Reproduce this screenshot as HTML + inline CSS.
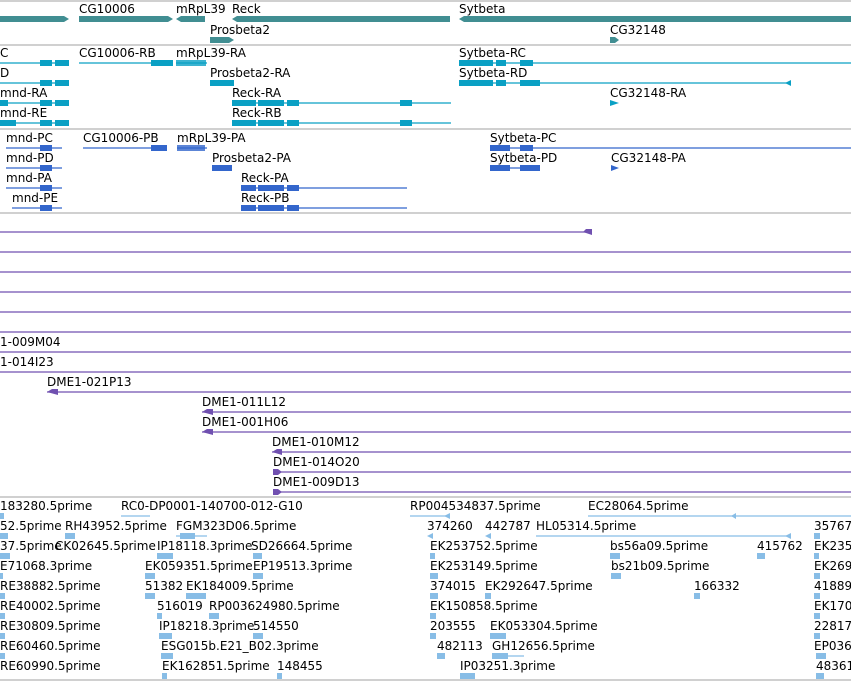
<!DOCTYPE html>
<html><head><meta charset="utf-8"><style>
html,body{margin:0;padding:0;background:#fff;}
svg{display:block;}
text{font-family:"DejaVu Sans","Liberation Sans",sans-serif;font-size:12px;fill:#000;}
</style></head><body>
<svg width="851" height="681" viewBox="0 0 851 681" xmlns="http://www.w3.org/2000/svg">
<g stroke="#c0c0c0" stroke-width="1.5">
<line x1="0" y1="1" x2="851" y2="1"/><line x1="0" y1="45" x2="851" y2="45"/>
<line x1="0" y1="129" x2="851" y2="129"/><line x1="0" y1="213" x2="851" y2="213"/>
<line x1="0" y1="497" x2="851" y2="497"/><line x1="0" y1="680" x2="851" y2="680"/>
</g>
<g fill="#418e92">
<polygon points="0,16 64,16 69,19 64,22 0,22"/>
<polygon points="79,16 168,16 173,19 168,22 79,22"/>
<polygon points="181,16 205,16 205,22 181,22 176,19"/>
<polygon points="237,16 450,16 450,22 237,22 232,19"/>
<polygon points="464,16 851,16 851,22 464,22 459,19"/>
<polygon points="210,37 229,37 234,40 229,43 210,43"/>
<polygon points="610,37 615,37 619,40 615,43 610,43"/>
</g>
<text x="79" y="13">CG10006</text><text x="176" y="13">mRpL39</text><text x="232" y="13">Reck</text><text x="459" y="13">Sytbeta</text>
<text x="210" y="34">Prosbeta2</text><text x="610" y="34">CG32148</text>
<g stroke="#0aa0c4" stroke-width="1.3">
<line x1="0" y1="63" x2="69" y2="63"/><line x1="0" y1="83" x2="69" y2="83"/><line x1="0" y1="103" x2="69" y2="103"/><line x1="0" y1="123" x2="69" y2="123"/>
<line x1="79" y1="63" x2="173" y2="63"/><line x1="176" y1="63" x2="207" y2="63"/>
<line x1="232" y1="103" x2="451" y2="103"/><line x1="232" y1="123" x2="451" y2="123"/>
<line x1="459" y1="63" x2="851" y2="63"/><line x1="459" y1="83" x2="791" y2="83"/>
</g>
<g fill="#0aa0c4">
<rect x="40" y="60" width="12" height="6"/><rect x="55" y="60" width="14" height="6"/>
<rect x="40" y="80" width="12" height="6"/><rect x="55" y="80" width="14" height="6"/>
<rect x="0" y="100" width="8" height="6"/><rect x="40" y="100" width="12" height="6"/><rect x="55" y="100" width="14" height="6"/>
<rect x="0" y="120" width="16" height="6"/><rect x="40" y="120" width="12" height="6"/><rect x="55" y="120" width="14" height="6"/>
<rect x="151" y="60" width="22" height="6"/>
<rect x="176" y="60" width="30" height="6" opacity=".8"/>
<rect x="210" y="80" width="24" height="6"/>
<rect x="232" y="100" width="24" height="6"/><rect x="258" y="100" width="26" height="6"/><rect x="287" y="100" width="12" height="6"/><rect x="400" y="100" width="12" height="6"/>
<rect x="232" y="120" width="24" height="6"/><rect x="258" y="120" width="26" height="6"/><rect x="287" y="120" width="12" height="6"/><rect x="400" y="120" width="12" height="6"/>
<rect x="459" y="60" width="34" height="6"/><rect x="496" y="60" width="10" height="6"/><rect x="520" y="60" width="13" height="6"/>
<rect x="459" y="80" width="34" height="6"/><rect x="496" y="80" width="10" height="6"/><rect x="520" y="80" width="20" height="6"/>
<polygon points="791,80 791,86 785,83"/><polygon points="610,100 619,103 610,106"/>
</g>
<text x="0" y="57">C</text><text x="79" y="57">CG10006-RB</text><text x="176" y="57">mRpL39-RA</text><text x="459" y="57">Sytbeta-RC</text>
<text x="0" y="77">D</text><text x="210" y="77">Prosbeta2-RA</text><text x="459" y="77">Sytbeta-RD</text>
<text x="0" y="97">mnd-RA</text><text x="232" y="97">Reck-RA</text><text x="610" y="97">CG32148-RA</text>
<text x="0" y="117">mnd-RE</text><text x="232" y="117">Reck-RB</text>
<g stroke="#3366cc" stroke-width="1.3">
<line x1="6" y1="148" x2="62" y2="148"/><line x1="6" y1="168" x2="62" y2="168"/><line x1="6" y1="188" x2="62" y2="188"/><line x1="12" y1="208" x2="62" y2="208"/>
<line x1="83" y1="148" x2="167" y2="148"/><line x1="177" y1="148" x2="207" y2="148"/>
<line x1="241" y1="188" x2="407" y2="188"/><line x1="241" y1="208" x2="407" y2="208"/>
<line x1="490" y1="148" x2="851" y2="148"/><line x1="490" y1="168" x2="540" y2="168"/>
</g>
<g fill="#3366cc">
<rect x="40" y="145" width="12" height="6"/><rect x="40" y="165" width="12" height="6"/><rect x="40" y="185" width="12" height="6"/><rect x="40" y="205" width="12" height="6"/>
<rect x="151" y="145" width="16" height="6"/><rect x="177" y="145" width="28" height="6" opacity=".8"/>
<rect x="212" y="165" width="20" height="6"/>
<rect x="241" y="185" width="15" height="6"/><rect x="258" y="185" width="26" height="6"/><rect x="287" y="185" width="12" height="6"/>
<rect x="241" y="205" width="15" height="6"/><rect x="258" y="205" width="26" height="6"/><rect x="287" y="205" width="12" height="6"/>
<rect x="490" y="145" width="20" height="6"/><rect x="520" y="145" width="13" height="6"/>
<rect x="490" y="165" width="20" height="6"/><rect x="520" y="165" width="20" height="6"/>
<polygon points="611,165 619,168 611,171"/>
</g>
<text x="6" y="142">mnd-PC</text><text x="83" y="142">CG10006-PB</text><text x="177" y="142">mRpL39-PA</text><text x="490" y="142">Sytbeta-PC</text>
<text x="6" y="162">mnd-PD</text><text x="212" y="162">Prosbeta2-PA</text><text x="490" y="162">Sytbeta-PD</text><text x="611" y="162">CG32148-PA</text>
<text x="6" y="182">mnd-PA</text><text x="241" y="182">Reck-PA</text>
<text x="12" y="202">mnd-PE</text><text x="241" y="202">Reck-PB</text>
<g stroke="#7050b0" stroke-width="1.3">
<line x1="0" y1="232" x2="592" y2="232"/>
<line x1="0" y1="252" x2="851" y2="252"/><line x1="0" y1="272" x2="851" y2="272"/><line x1="0" y1="292" x2="851" y2="292"/>
<line x1="0" y1="312" x2="851" y2="312"/><line x1="0" y1="332" x2="851" y2="332"/><line x1="0" y1="352" x2="851" y2="352"/><line x1="0" y1="372" x2="851" y2="372"/>
<line x1="47" y1="392" x2="851" y2="392"/><line x1="202" y1="412" x2="851" y2="412"/><line x1="202" y1="432" x2="851" y2="432"/>
<line x1="272" y1="452" x2="851" y2="452"/><line x1="273" y1="472" x2="851" y2="472"/><line x1="273" y1="492" x2="851" y2="492"/>
</g>
<g fill="#7050b0">
<polygon points="592,229 592,235 583,232 586,229"/>
<polygon points="58,389 58,395 47,392 52,389"/>
<polygon points="213,409 213,415 202,412 207,409"/><polygon points="213,429 213,435 202,432 207,429"/>
<polygon points="282,449 282,455 272,452 277,449"/>
<polygon points="273,469 278,469 282,472 278,475 273,475"/><polygon points="273,489 278,489 282,492 278,495 273,495"/>
</g>
<text x="0" y="346">1-009M04</text><text x="0" y="366">1-014I23</text><text x="47" y="386">DME1-021P13</text>
<text x="202" y="406">DME1-011L12</text><text x="202" y="426">DME1-001H06</text>
<text x="272" y="446">DME1-010M12</text><text x="273" y="466">DME1-014O20</text><text x="273" y="486">DME1-009D13</text>
<g stroke="#88bde6" stroke-width="1.3">
<line x1="121" y1="516" x2="150" y2="516"/><line x1="410" y1="516" x2="450" y2="516"/><line x1="588" y1="516" x2="851" y2="516"/>
<line x1="536" y1="536" x2="791" y2="536"/><line x1="176" y1="536" x2="207" y2="536"/><line x1="492" y1="656" x2="524" y2="656"/>
</g>
<g fill="#88bde6">
<rect x="0" y="513" width="4" height="6"/><polygon points="736,513 736,519 731,516"/><polygon points="450,513 450,519 444,516"/>
<rect x="0" y="533" width="8" height="6"/><rect x="65" y="533" width="10" height="6"/><rect x="180" y="533" width="15" height="6"/><polygon points="427,536 433,533 433,539"/><polygon points="485,536 491,533 491,539"/><polygon points="791,533 791,539 785,536"/><rect x="814" y="533" width="6" height="6"/>
<rect x="0" y="553" width="10" height="6"/><rect x="157" y="553" width="16" height="6"/><rect x="253" y="553" width="9" height="6"/><rect x="430" y="553" width="5" height="6"/><rect x="610" y="553" width="10" height="6"/><rect x="757" y="553" width="8" height="6"/><rect x="814" y="553" width="5" height="6"/>
<rect x="0" y="573" width="3" height="6"/><rect x="145" y="573" width="10" height="6"/><rect x="253" y="573" width="10" height="6"/><rect x="430" y="573" width="8" height="6"/><rect x="611" y="573" width="10" height="6"/><rect x="814" y="573" width="6" height="6"/>
<rect x="0" y="593" width="5" height="6"/><rect x="145" y="593" width="10" height="6"/><rect x="186" y="593" width="20" height="6"/><rect x="430" y="593" width="8" height="6"/><rect x="485" y="593" width="6" height="6"/><rect x="694" y="593" width="6" height="6"/><rect x="814" y="593" width="6" height="6"/>
<rect x="0" y="613" width="5" height="6"/><rect x="157" y="613" width="5" height="6"/><rect x="209" y="613" width="10" height="6"/><rect x="430" y="613" width="6" height="6"/><rect x="814" y="613" width="6" height="6"/>
<rect x="0" y="633" width="5" height="6"/><rect x="159" y="633" width="13" height="6"/><rect x="253" y="633" width="10" height="6"/><rect x="430" y="633" width="6" height="6"/><rect x="490" y="633" width="16" height="6"/><rect x="814" y="633" width="6" height="6"/>
<rect x="0" y="653" width="5" height="6"/><rect x="161" y="653" width="12" height="6"/><rect x="437" y="653" width="8" height="6"/><rect x="492" y="653" width="16" height="6"/><rect x="816" y="653" width="10" height="6"/>
<rect x="162" y="673" width="5" height="6"/><rect x="277" y="673" width="5" height="6"/><rect x="460" y="673" width="15" height="6"/><rect x="816" y="673" width="8" height="6"/>
</g>
<text x="0" y="510">183280.5prime</text><text x="121" y="510">RC0-DP0001-140700-012-G10</text><text x="410" y="510">RP004534837.5prime</text><text x="588" y="510">EC28064.5prime</text>
<text x="0" y="530">52.5prime</text><text x="65" y="530">RH43952.5prime</text><text x="176" y="530">FGM323D06.5prime</text><text x="427" y="530">374260</text><text x="485" y="530">442787</text><text x="536" y="530">HL05314.5prime</text><text x="814" y="530">35767</text>
<text x="0" y="550">37.5prime</text><text x="55" y="550">CK02645.5prime</text><text x="157" y="550">IP18118.3prime</text><text x="251" y="550">SD26664.5prime</text><text x="430" y="550">EK253752.5prime</text><text x="610" y="550">bs56a09.5prime</text><text x="757" y="550">415762</text><text x="814" y="550">EK235</text>
<text x="0" y="570">E71068.3prime</text><text x="145" y="570">EK059351.5prime</text><text x="253" y="570">EP19513.3prime</text><text x="430" y="570">EK253149.5prime</text><text x="611" y="570">bs21b09.5prime</text><text x="814" y="570">EK269</text>
<text x="0" y="590">RE38882.5prime</text><text x="145" y="590">51382</text><text x="186" y="590">EK184009.5prime</text><text x="430" y="590">374015</text><text x="485" y="590">EK292647.5prime</text><text x="694" y="590">166332</text><text x="814" y="590">41889</text>
<text x="0" y="610">RE40002.5prime</text><text x="157" y="610">516019</text><text x="209" y="610">RP003624980.5prime</text><text x="430" y="610">EK150858.5prime</text><text x="814" y="610">EK170</text>
<text x="0" y="630">RE30809.5prime</text><text x="159" y="630">IP18218.3prime</text><text x="253" y="630">514550</text><text x="430" y="630">203555</text><text x="490" y="630">EK053304.5prime</text><text x="814" y="630">22817</text>
<text x="0" y="650">RE60460.5prime</text><text x="161" y="650">ESG015b.E21_B02.3prime</text><text x="437" y="650">482113</text><text x="492" y="650">GH12656.5prime</text><text x="814" y="650">EP036</text>
<text x="0" y="670">RE60990.5prime</text><text x="162" y="670">EK162851.5prime</text><text x="277" y="670">148455</text><text x="460" y="670">IP03251.3prime</text><text x="816" y="670">48361</text>
</svg>
</body></html>
